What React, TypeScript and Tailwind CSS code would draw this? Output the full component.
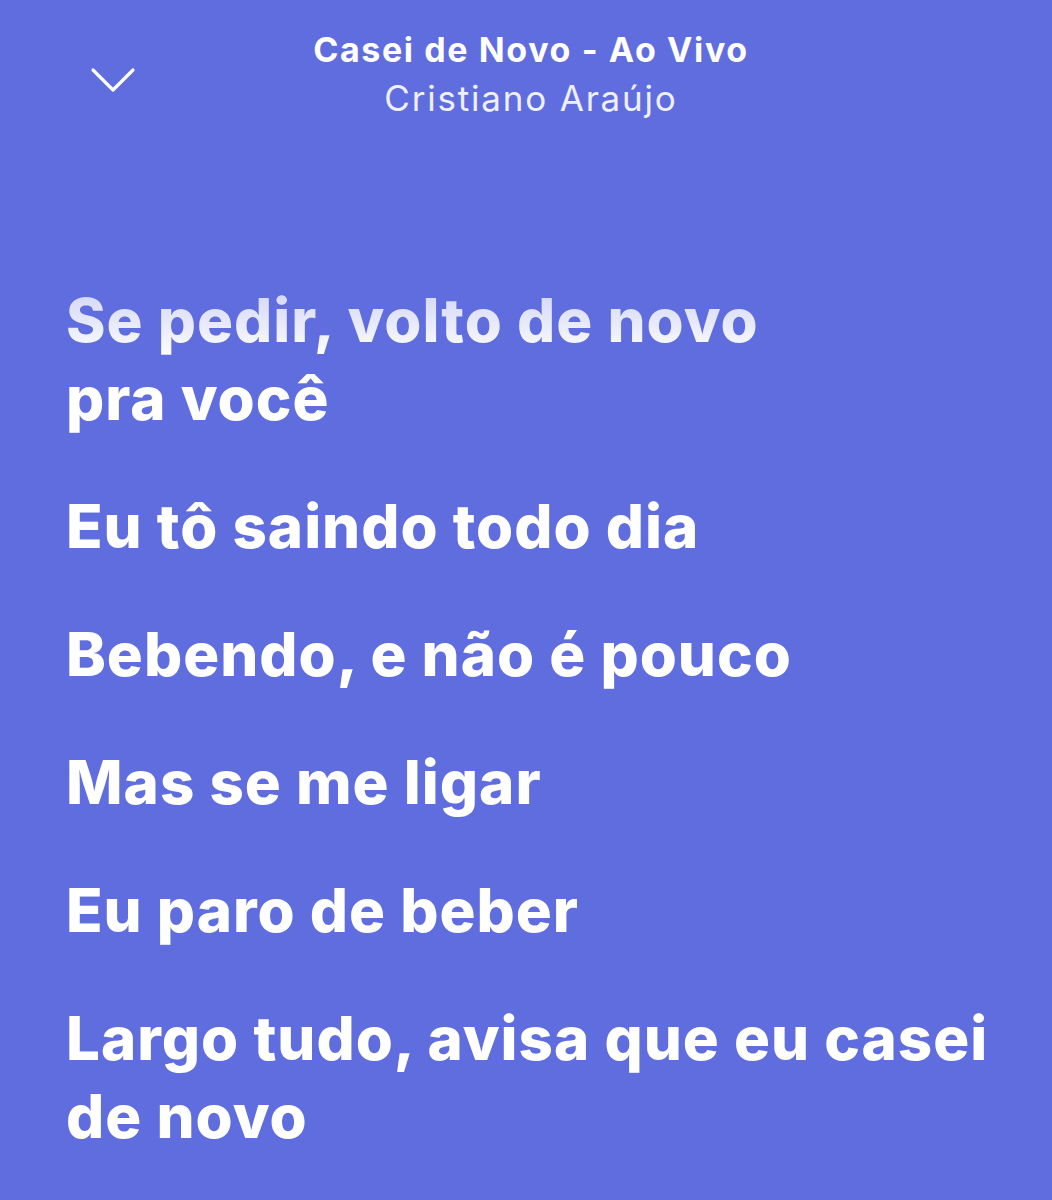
import React from "react";

const lyrics: string[][] = [
  ["Se pedir, volto de novo", "pra você"],
  ["Eu tô saindo todo dia"],
  ["Bebendo, e não é pouco"],
  ["Mas se me ligar"],
  ["Eu paro de beber"],
  ["Largo tudo, avisa que eu casei", "de novo"],
];

const ChevronDown = () => (
  <svg width="46" height="28" viewBox="0 0 46 28" fill="none">
    <path
      d="M3 4 L23 24 L43 4"
      stroke="white"
      strokeWidth="3.2"
      strokeLinecap="round"
      strokeLinejoin="round"
    />
  </svg>
);

const App = () => {
  return (
    <div
      className="w-[1052px] h-[1200px] overflow-hidden bg-[#5f6ddf] text-white"
      style={{ fontFamily: "Inter, 'Noto Sans', sans-serif" }}
    >
      <header className="relative flex flex-col items-center pt-[25px] pl-[10px]">
        <button className="absolute left-[90px] top-[66px]">
          <ChevronDown />
        </button>
        <h1 className="text-[34px] leading-[49px] font-bold tracking-[1.6px]">
          Casei de Novo - Ao Vivo
        </h1>
        <p className="text-[35px] leading-[49px] font-normal text-white/90 tracking-[1.8px]">
          Cristiano Araújo
        </p>
      </header>

      <main className="flex flex-col gap-[50px] pl-[66px] pr-[30px] pt-[158px]">
        {lyrics.map((lines, i) => (
          <p
            key={i}
            className="text-[60px] leading-[78px] font-extrabold tracking-[1px]"
          >
            {lines.map((line, j) => (
              <span
                key={j}
                className={
                  i === 0 && j === 0
                    ? "block bg-gradient-to-b from-[#cdd1f3] to-white bg-clip-text text-transparent"
                    : "block"
                }
              >
                {line}
              </span>
            ))}
          </p>
        ))}
      </main>
    </div>
  );
};

export default App;
